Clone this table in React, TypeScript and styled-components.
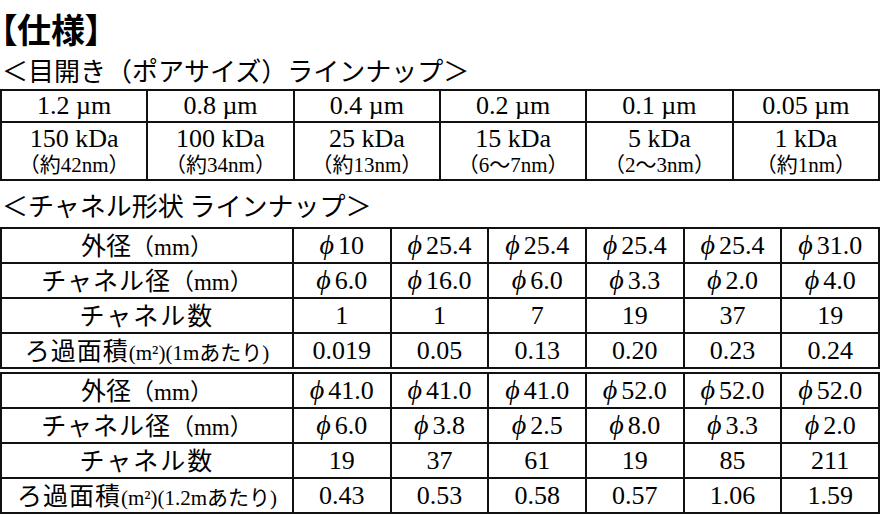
import React from "react";
import styled, { createGlobalStyle } from "styled-components";

const Global = createGlobalStyle`
  html, body { margin: 0; padding: 0; background: #fff; }
  body {
    font-family: "Liberation Serif", "Noto Sans CJK JP", serif;
    color: #000;
  }
`;

const Page = styled.div`
  width: 881px;
  display: flex;
  flex-direction: column;
`;

const Title = styled.h1`
  margin: 9px 0 0 0;
  font-family: "Noto Sans CJK JP", sans-serif;
  font-weight: 700;
  font-size: 34px;
  line-height: 40px;
  font-feature-settings: "palt";
`;

const Subtitle = styled.h2<{ $top: number }>`
  margin: ${(p) => p.$top}px 0 0 2px;
  font-family: "Noto Sans CJK JP", sans-serif;
  font-weight: 400;
  font-size: 26px;
  line-height: 30px;
  white-space: pre;
`;

const Grid = styled.table<{ $top: number }>`
  width: 880px;
  margin-top: ${(p) => p.$top}px;
  border-collapse: separate;
  border-spacing: 0;
  table-layout: fixed;
  border-top: 2px solid #111;
  border-left: 2px solid #111;
`;

const Row = styled.tr<{ $h: number }>`
  height: ${(p) => p.$h}px;
`;

const Cell = styled.td`
  border-right: 2px solid #111;
  border-bottom: 2px solid #111;
  padding: 0;
  text-align: center;
  vertical-align: middle;
  font-family: "Liberation Serif", "Noto Sans CJK JP", serif;
  font-size: 26px;
  line-height: 26px;
  white-space: nowrap;
`;

const Stack = styled.div`
  display: flex;
  flex-direction: column;
  align-items: center;
  gap: 1px;
`;

const Main = styled.span`
  font-size: 26px;
  line-height: 26px;
`;

const Sub = styled.span`
  font-size: 21px;
  line-height: 24px;
`;

const Phi = styled.span`
  font-family: "Liberation Serif", "DejaVu Serif", serif;
  font-style: italic;
  font-size: 28px;
  margin-right: 4px;
`;

const LabelMain = styled.span<{ $ls?: number }>`
  font-family: "Noto Sans CJK JP", sans-serif;
  font-size: 25px;
  letter-spacing: ${(p) => p.$ls ?? 0}px;
`;

const LabelSmall = styled.span<{ $size: number }>`
  font-family: "Liberation Serif", "Noto Sans CJK JP", serif;
  font-size: ${(p) => p.$size}px;
`;

const pores = ["1.2 µm", "0.8 µm", "0.4 µm", "0.2 µm", "0.1 µm", "0.05 µm"];
const kda: [string, string][] = [
  ["150 kDa", "（約42nm）"],
  ["100 kDa", "（約34nm）"],
  ["25 kDa", "（約13nm）"],
  ["15 kDa", "（6〜7nm）"],
  ["5 kDa", "（2〜3nm）"],
  ["1 kDa", "（約1nm）"],
];

type Spec = {
  outer: string[];
  channel: string[];
  count: string[];
  area: string[];
  length: string;
};

const specs: Spec[] = [
  {
    outer: ["10", "25.4", "25.4", "25.4", "25.4", "31.0"],
    channel: ["6.0", "16.0", "6.0", "3.3", "2.0", "4.0"],
    count: ["1", "1", "7", "19", "37", "19"],
    area: ["0.019", "0.05", "0.13", "0.20", "0.23", "0.24"],
    length: "1m",
  },
  {
    outer: ["41.0", "41.0", "41.0", "52.0", "52.0", "52.0"],
    channel: ["6.0", "3.8", "2.5", "8.0", "3.3", "2.0"],
    count: ["19", "37", "61", "19", "85", "211"],
    area: ["0.43", "0.53", "0.58", "0.57", "1.06", "1.59"],
    length: "1.2m",
  },
];

const Diam: React.FC<{ v: string }> = ({ v }) => (
  <>
    <Phi>ϕ</Phi>
    {v}
  </>
);

const ChannelTable: React.FC<{ spec: Spec; top: number }> = ({ spec, top }) => (
  <Grid $top={top}>
    <colgroup>
      <col style={{ width: 292 }} />
      <col />
      <col />
      <col />
      <col />
      <col />
      <col />
    </colgroup>
    <tbody>
      <Row $h={35}>
        <Cell>
          <LabelMain>外径</LabelMain>
          <LabelSmall $size={23}>（mm）</LabelSmall>
        </Cell>
        {spec.outer.map((v, i) => (
          <Cell key={i}>
            <Diam v={v} />
          </Cell>
        ))}
      </Row>
      <Row $h={35}>
        <Cell>
          <LabelMain $ls={1}>チャネル径</LabelMain>
          <LabelSmall $size={23}>（mm）</LabelSmall>
        </Cell>
        {spec.channel.map((v, i) => (
          <Cell key={i}>
            <Diam v={v} />
          </Cell>
        ))}
      </Row>
      <Row $h={35}>
        <Cell>
          <LabelMain $ls={2}>チャネル数</LabelMain>
        </Cell>
        {spec.count.map((v, i) => (
          <Cell key={i}>{v}</Cell>
        ))}
      </Row>
      <Row $h={35}>
        <Cell>
          <LabelMain $ls={1}>ろ過面積</LabelMain>
          <LabelSmall $size={21}>
            (m²)({spec.length}あたり)
          </LabelSmall>
        </Cell>
        {spec.area.map((v, i) => (
          <Cell key={i}>{v}</Cell>
        ))}
      </Row>
    </tbody>
  </Grid>
);

export default function App() {
  return (
    <Page>
      <Global />
      <Title>【仕様】</Title>
      <Subtitle $top={6}>＜目開き（ポアサイズ）ラインナップ＞</Subtitle>
      <Grid $top={4}>
        <tbody>
          <Row $h={32}>
            {pores.map((p) => (
              <Cell key={p}>{p}</Cell>
            ))}
          </Row>
          <Row $h={58}>
            {kda.map(([a, b]) => (
              <Cell key={a}>
                <Stack>
                  <Main>{a}</Main>
                  <Sub>{b}</Sub>
                </Stack>
              </Cell>
            ))}
          </Row>
        </tbody>
      </Grid>
      <Subtitle $top={9}>＜チャネル形状 ラインナップ＞</Subtitle>
      <ChannelTable spec={specs[0]} top={7} />
      <ChannelTable spec={specs[1]} top={3} />
    </Page>
  );
}
